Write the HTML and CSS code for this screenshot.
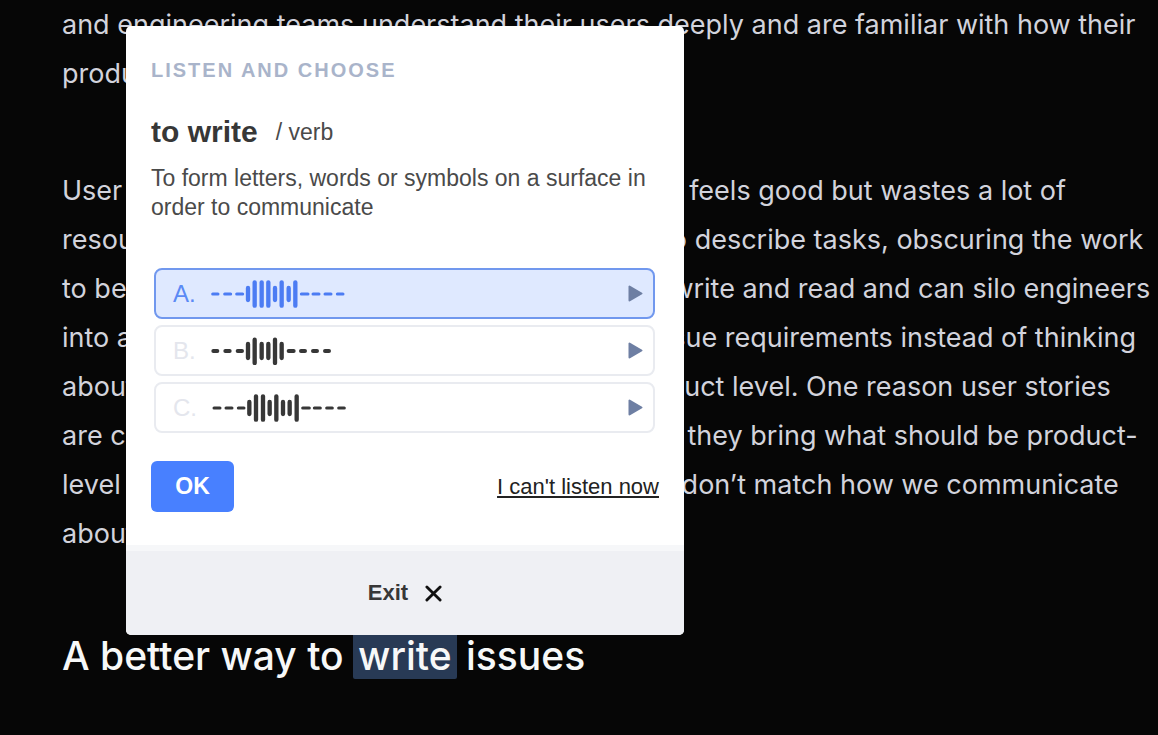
FILE: index.html
```html
<!DOCTYPE html>
<html lang="en">

<head>
  <meta charset="UTF-8" />
  <title>Listen and choose</title>
  <meta name="viewport" content="width=device-width, initial-scale=1.0" />
  <link rel="stylesheet" href="styles.css">
</head>

<body>

  <main class="article">
    <p>and engineering teams understand their users deeply and are familiar with how their<br>
      product works and what it should do.</p>

    <p>User stories have become a cargo cult ritual that feels good but wastes a lot of<br>
      resources and time. They’re a roundabout way to describe tasks, obscuring the work<br>
      to be done. User stories are time-consuming to write and read and can silo engineers<br>
      into a mechanical role where they code to the issue requirements instead of thinking<br>
      about the user experience holistically at the product level. One reason user stories<br>
      are cumbersome to work with is largely because they bring what should be product-<br>
      level decisions down to the task level. They also don’t match how we communicate<br>
      about software today.</p>

    <h2>A better way to <mark>write</mark> issues</h2>
  </main>

  <!-- Word popup -->
  <section class="popup" role="dialog" aria-labelledby="popupTitle">
    <form class="popup-body">
      <h3 class="popup-title" id="popupTitle">LISTEN AND CHOOSE</h3>

      <div class="word-row">
        <span class="word">to write</span>
        <span class="word-type">/ verb</span>
      </div>
      <p class="definition">To form letters, words or symbols on a surface in order to communicate</p>

      <div class="options">
        <div class="option">
          <input type="radio" name="answer" id="answerA" checked>
          <label for="answerA">
            <span class="letter">A.</span>
            <svg class="wave" viewBox="198 0 405 84" role="img" aria-label="Recording A">
              <path class="dash" d="M203 42H219M239 42H257M275 42H293M469 42H489M504 42H522M540 42H558M577 42H594" />
              <path class="bar" d="M309 24V60M329 7V77M350 7V77M370 7V77M390 24V60M410 7V77M431 24V60M451 7V77" />
            </svg>
          </label>
          <button type="button" class="play" aria-label="Play A">
            <svg viewBox="0 0 15 17"><path d="M1.5 1.5V15.5L13.5 8.5Z" /></svg>
          </button>
        </div>

        <div class="option">
          <input type="radio" name="answer" id="answerB">
          <label for="answerB">
            <span class="letter">B.</span>
            <svg class="wave" viewBox="198 0 405 84" role="img" aria-label="Recording B">
              <path class="dash thick" d="M205 42H217M241 42H254M278 42H291M431 42H446M468 42H480M504 42H516M540 42H552" />
              <path class="bar" d="M309 21V63M329 8V78M350 21V63M370 21V63M390 8V78M410 21V63" />
            </svg>
          </label>
          <button type="button" class="play" aria-label="Play B">
            <svg viewBox="0 0 15 17"><path d="M1.5 1.5V15.5L13.5 8.5Z" /></svg>
          </button>
        </div>

        <div class="option">
          <input type="radio" name="answer" id="answerC">
          <label for="answerC">
            <span class="letter">C.</span>
            <svg class="wave" viewBox="198 0 405 84" role="img" aria-label="Recording C">
              <path class="dash" d="M207 42H225M243 42H261M280 42H297M473 42H493M508 42H526M545 42H562M581 42H598" />
              <path class="bar" d="M313 24V60M333 7V77M354 7V77M374 24V60M394 7V77M414 24V60M434 24V60M455 7V77" />
            </svg>
          </label>
          <button type="button" class="play" aria-label="Play C">
            <svg viewBox="0 0 15 17"><path d="M1.5 1.5V15.5L13.5 8.5Z" /></svg>
          </button>
        </div>
      </div>

      <div class="actions">
        <button type="submit" class="ok">OK</button>
        <a href="#" class="skip">I can't listen now</a>
      </div>
    </form>

    <button type="button" class="exit">
      Exit
      <svg viewBox="0 0 18 18"><path d="M2 2L16 16M16 2L2 16" /></svg>
    </button>
  </section>

</body>

</html>
```

FILE: styles.css
```css
:root {
  --bg: #060606;
  --text: #d2d3dc;
  --accent: #4880ff;
  --ink: #373737;
  --line: #e9ebf0;
}

* {
  box-sizing: border-box;
}

body {
  margin: 0;
  background-color: var(--bg);
  color: var(--text);
  font-family: Inter, sans-serif;
  overflow: hidden;
}

.article {
  padding-left: 62px;
  font-size: 27px;
  line-height: 49px;
  white-space: nowrap;
}

.article p {
  margin: 0 0 68px;
}

.article h2 {
  margin: 0;
  color: #f7f8f8;
  font-size: 39px;
  font-weight: 500;
  line-height: 60px;
}

.article mark {
  padding: 0 5px;
  margin: 0 -1px;
  border-radius: 2px;
  background-color: #283a55;
  color: inherit;
}

.popup {
  position: absolute;
  top: 26px;
  left: 126px;
  width: 558px;
  border-radius: 5px;
  overflow: hidden;
  background-color: #fff;
  color: var(--ink);
  font-family: "Liberation Sans", Arial, sans-serif;
}

.popup-body {
  padding: 30px 25px 33px;
}

.popup-title {
  margin: 0 0 28px;
  color: #a9b4ca;
  font-size: 20px;
  line-height: 28px;
  letter-spacing: 2px;
}

.word-row {
  display: flex;
  align-items: center;
  gap: 18px;
  margin-bottom: 12px;
  line-height: 40px;
}

.word {
  font-size: 30px;
  font-weight: bold;
}

.word-type {
  color: #4a4a4a;
  font-size: 23px;
}

.definition {
  margin: 0 0 46px;
  color: #4a4a4a;
  font-size: 23px;
  line-height: 29px;
}

.options {
  display: flex;
  flex-direction: column;
  gap: 6px;
  padding: 0 4px 0 3px;
}

.option {
  position: relative;
  display: flex;
  align-items: center;
  height: 51px;
  border: 2px solid var(--line);
  border-radius: 8px;
}

.option input {
  position: absolute;
  opacity: 0;
}

.option label {
  display: flex;
  flex: 1;
  align-items: center;
  padding-left: 17px;
  cursor: pointer;
}

.letter {
  width: 38px;
  color: #e4e6ed;
  font-size: 24px;
}

.wave {
  width: 135px;
  height: 28px;
  fill: none;
  stroke: var(--ink);
  stroke-linecap: round;
}

.dash {
  stroke-width: 9;
}

.thick {
  stroke-width: 12;
}

.bar {
  stroke-width: 13;
}

.option:has(input:checked) {
  border-color: #7198ee;
  background-color: #dfe9ff;
}

input:checked + label .letter {
  color: #5b8af5;
}

input:checked + label .wave {
  stroke: #4c7cf3;
}

.play {
  display: flex;
  padding: 8px 10px;
  border: none;
  background: none;
  cursor: pointer;
}

.play svg {
  width: 15px;
  height: 17px;
  fill: #6e7fa3;
  stroke: #6e7fa3;
  stroke-width: 2;
  stroke-linejoin: round;
}

.actions {
  display: flex;
  align-items: center;
  justify-content: space-between;
  margin-top: 28px;
}

.ok {
  width: 83px;
  height: 51px;
  border: none;
  border-radius: 6px;
  background-color: var(--accent);
  color: #fff;
  font: bold 23px "Liberation Sans", Arial, sans-serif;
  cursor: pointer;
}

.skip {
  color: #222;
  font-size: 22px;
  text-underline-offset: 2px;
}

.exit {
  display: flex;
  align-items: center;
  justify-content: center;
  gap: 17px;
  width: 100%;
  height: 90px;
  border: none;
  border-top: 6px solid #f6f7f9;
  background-color: #eff0f4;
  color: var(--ink);
  font: bold 22px "Liberation Sans", Arial, sans-serif;
  cursor: pointer;
}

.exit svg {
  width: 17px;
  height: 17px;
  fill: none;
  stroke: #111;
  stroke-width: 3;
  stroke-linecap: round;
}
```
